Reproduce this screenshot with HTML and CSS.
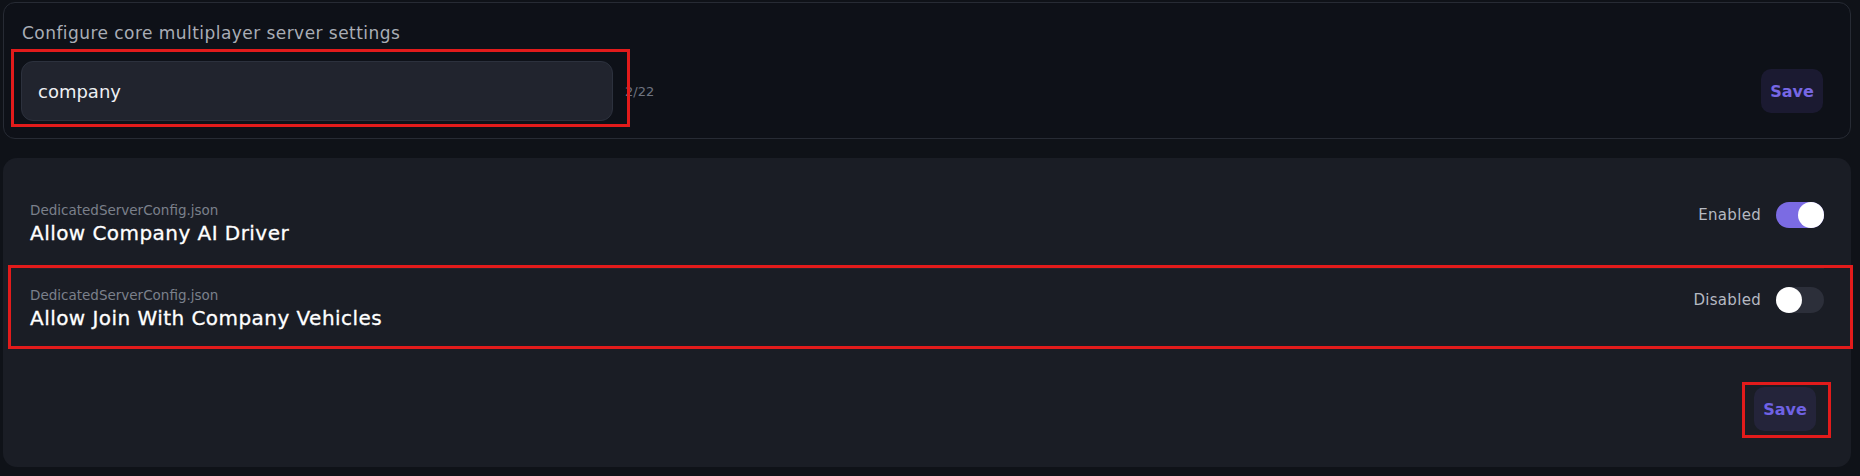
FILE: index.html
```html
<!DOCTYPE html>
<html lang="en">
<head>
<meta charset="utf-8">
<title>Server settings</title>
<link rel="stylesheet" href="styles.css">
</head>
<body>
<div class="page">
  <section class="card card-top">
    <p class="card-desc">Configure core multiplayer server settings</p>
    <div class="field-row">
      <div class="field annotated">
        <div class="text-input">company</div>
        <span class="mark mark-input"></span>
      </div>
      <span class="counter">2/22</span>
      <button class="save-btn" type="button">Save</button>
    </div>
  </section>

  <section class="card card-settings">
    <div class="setting-row">
      <div class="setting-info">
        <div class="setting-file">DedicatedServerConfig.json</div>
        <div class="setting-title">Allow Company AI Driver</div>
      </div>
      <div class="setting-control">
        <span class="state-label">Enabled</span>
        <span class="toggle toggle--on"><span class="knob"></span></span>
      </div>
    </div>
    <div class="setting-row annotated">
      <div class="setting-info">
        <div class="setting-file">DedicatedServerConfig.json</div>
        <div class="setting-title">Allow Join With Company Vehicles</div>
      </div>
      <div class="setting-control">
        <span class="state-label">Disabled</span>
        <span class="toggle"><span class="knob"></span></span>
      </div>
      <span class="mark mark-row"></span>
    </div>
    <div class="card-footer">
      <div class="annotated">
        <button class="save-btn save-btn--alt" type="button">Save</button>
        <span class="mark mark-save"></span>
      </div>
    </div>
  </section>
</div>
</body>
</html>
```

FILE: styles.css
```css
* { box-sizing: border-box; }

html, body {
  margin: 0;
  background: #0f1218;
}

body {
  font-family: "DejaVu Sans", "Inter", sans-serif;
  color: #e8eaee;
}

.page {
  display: flex;
  flex-direction: column;
  gap: 19px;
  padding: 2px 9px 9px 3px;
}

.card {
  border-radius: 12px;
}

.card-top {
  background: #0e1118;
  border: 1px solid #272b34;
  padding: 18px 27px 17px 17px;
}

.card-desc {
  margin: 0 0 16px 1px;
  font-size: 17px;
  letter-spacing: 0.45px;
  line-height: 24px;
  color: #a9adb5;
}

.field-row {
  display: flex;
  align-items: center;
}

.annotated {
  position: relative;
}

.field {
  width: 592px;
}

.text-input {
  height: 60px;
  display: flex;
  align-items: center;
  padding: 0 16px;
  background: #21242e;
  border: 1px solid #2c313d;
  border-radius: 12px;
  font-size: 18px;
  color: #eef0f3;
}

.counter {
  margin-left: 12px;
  font-size: 13px;
  color: #6f7480;
  flex: 1;
}

.save-btn {
  width: 62px;
  height: 44px;
  border: 0;
  border-radius: 10px;
  background: #1b1a31;
  color: #7767e4;
  font-family: inherit;
  font-weight: 700;
  font-size: 16px;
  padding: 0;
  cursor: pointer;
}

.save-btn--alt {
  display: block;
  background: #24243a;
  color: #6f62e4;
}

.mark {
  position: absolute;
  border: 3px solid #e21b1b;
  pointer-events: none;
}

.mark-input { left: -10px; right: -17px; top: -12px; bottom: -6px; }
.mark-row { left: -22px; right: -29px; top: -4px; bottom: 4px; }
.mark-save { left: -12px; right: -15px; top: -5px; bottom: -7px; }

.card-settings {
  background: #1a1d25;
  border-radius: 14px;
  padding: 25px 27px 0 27px;
}

.setting-row {
  display: flex;
  justify-content: space-between;
  align-items: flex-start;
  padding: 18px 0 21px;
}

.setting-row + .setting-row {
  border-top: 1px solid #22252e;
  padding-top: 17px;
}

.setting-file {
  font-size: 13.5px;
  line-height: 18px;
  color: #7b808b;
}

.setting-title {
  font-size: 20px;
  letter-spacing: 0.45px;
  line-height: 28px;
  color: #ffffff;
  -webkit-text-stroke: 0.3px #ffffff;
}

.setting-control {
  display: flex;
  align-items: center;
  gap: 15px;
  margin-top: 1px;
}

.state-label {
  font-size: 15px;
  letter-spacing: 0.3px;
  color: #b5b9c2;
}

.toggle {
  width: 48px;
  height: 26px;
  border-radius: 13px;
  background: #2c2f3a;
  display: flex;
  justify-content: flex-start;
}

.toggle--on {
  background: #7b6be3;
  justify-content: flex-end;
}

.knob {
  width: 26px;
  height: 26px;
  border-radius: 50%;
  background: #ffffff;
}

.card-footer {
  display: flex;
  justify-content: flex-end;
  padding: 34px 8px 36px 0;
}
```
